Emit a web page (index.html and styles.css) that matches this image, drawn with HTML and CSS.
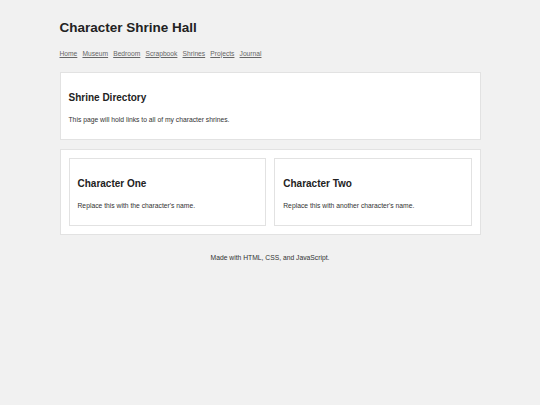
FILE: index.html
```html
<!DOCTYPE html>
<html lang="en">
<head>
    <meta charset="UTF-8">
    <meta name="viewport" content="width=device-width, initial-scale=1.0">
    <title>Character Shrine Hall</title>
    <link rel="stylesheet" href="styles.css">
</head>
<body>

    <div class="page">
        <header class="site-header">
            <h1>Character Shrine Hall</h1>
            <nav class="site-nav">
                <a href="#">Home</a>
                <a href="#">Museum</a>
                <a href="#">Bedroom</a>
                <a href="#">Scrapbook</a>
                <a href="#">Shrines</a>
                <a href="#">Projects</a>
                <a href="#">Journal</a>
            </nav>
        </header>

        <section class="panel">
            <h2>Shrine Directory</h2>
            <p>This page will hold links to all of my character shrines.</p>
        </section>

        <section class="panel shrine-grid">
            <div class="shrine-card">
                <h2>Character One</h2>
                <p>Replace this with the character's name.</p>
            </div>
            <div class="shrine-card">
                <h2>Character Two</h2>
                <p>Replace this with another character's name.</p>
            </div>
        </section>

        <footer class="site-footer">
            <p>Made with HTML, CSS, and JavaScript.</p>
        </footer>
    </div>

</body>
</html>
```

FILE: styles.css
```css
body {
    background-color: #f1f1f1;
    color: #222;
    margin: 0;
    font-family: 'Liberation Sans', Arial, sans-serif;
    font-size: 6.75px;
}

.page {
    width: 421px;
    margin: 0 auto;
    padding-top: 20px;
}

h1 {
    margin: 0 0 14.5px 0;
    font-size: 13.5px;
}

h2 {
    margin: 19px 0 13px 0;
    font-size: 10px;
}

p {
    margin: 0 0 8px 0;
    color: #333;
}

.site-nav {
    display: flex;
    gap: 5.1px;
}

.site-nav a {
    color: #666;
    font-size: 6.7px;
}

.site-header {
    margin-bottom: 15.5px;
}

.panel {
    background-color: #fff;
    border: 1px solid #e2e2e2;
    padding: 0 8px 8px 8px;
    margin-bottom: 9px;
}

.shrine-grid {
    display: grid;
    grid-template-columns: 1fr 1fr;
    gap: 8.5px;
    padding-top: 7.5px;
}

.shrine-card {
    border: 1px solid #e2e2e2;
    padding: 0 8px 8px 8px;
}

.site-footer {
    text-align: center;
    padding-top: 10px;
}
```
